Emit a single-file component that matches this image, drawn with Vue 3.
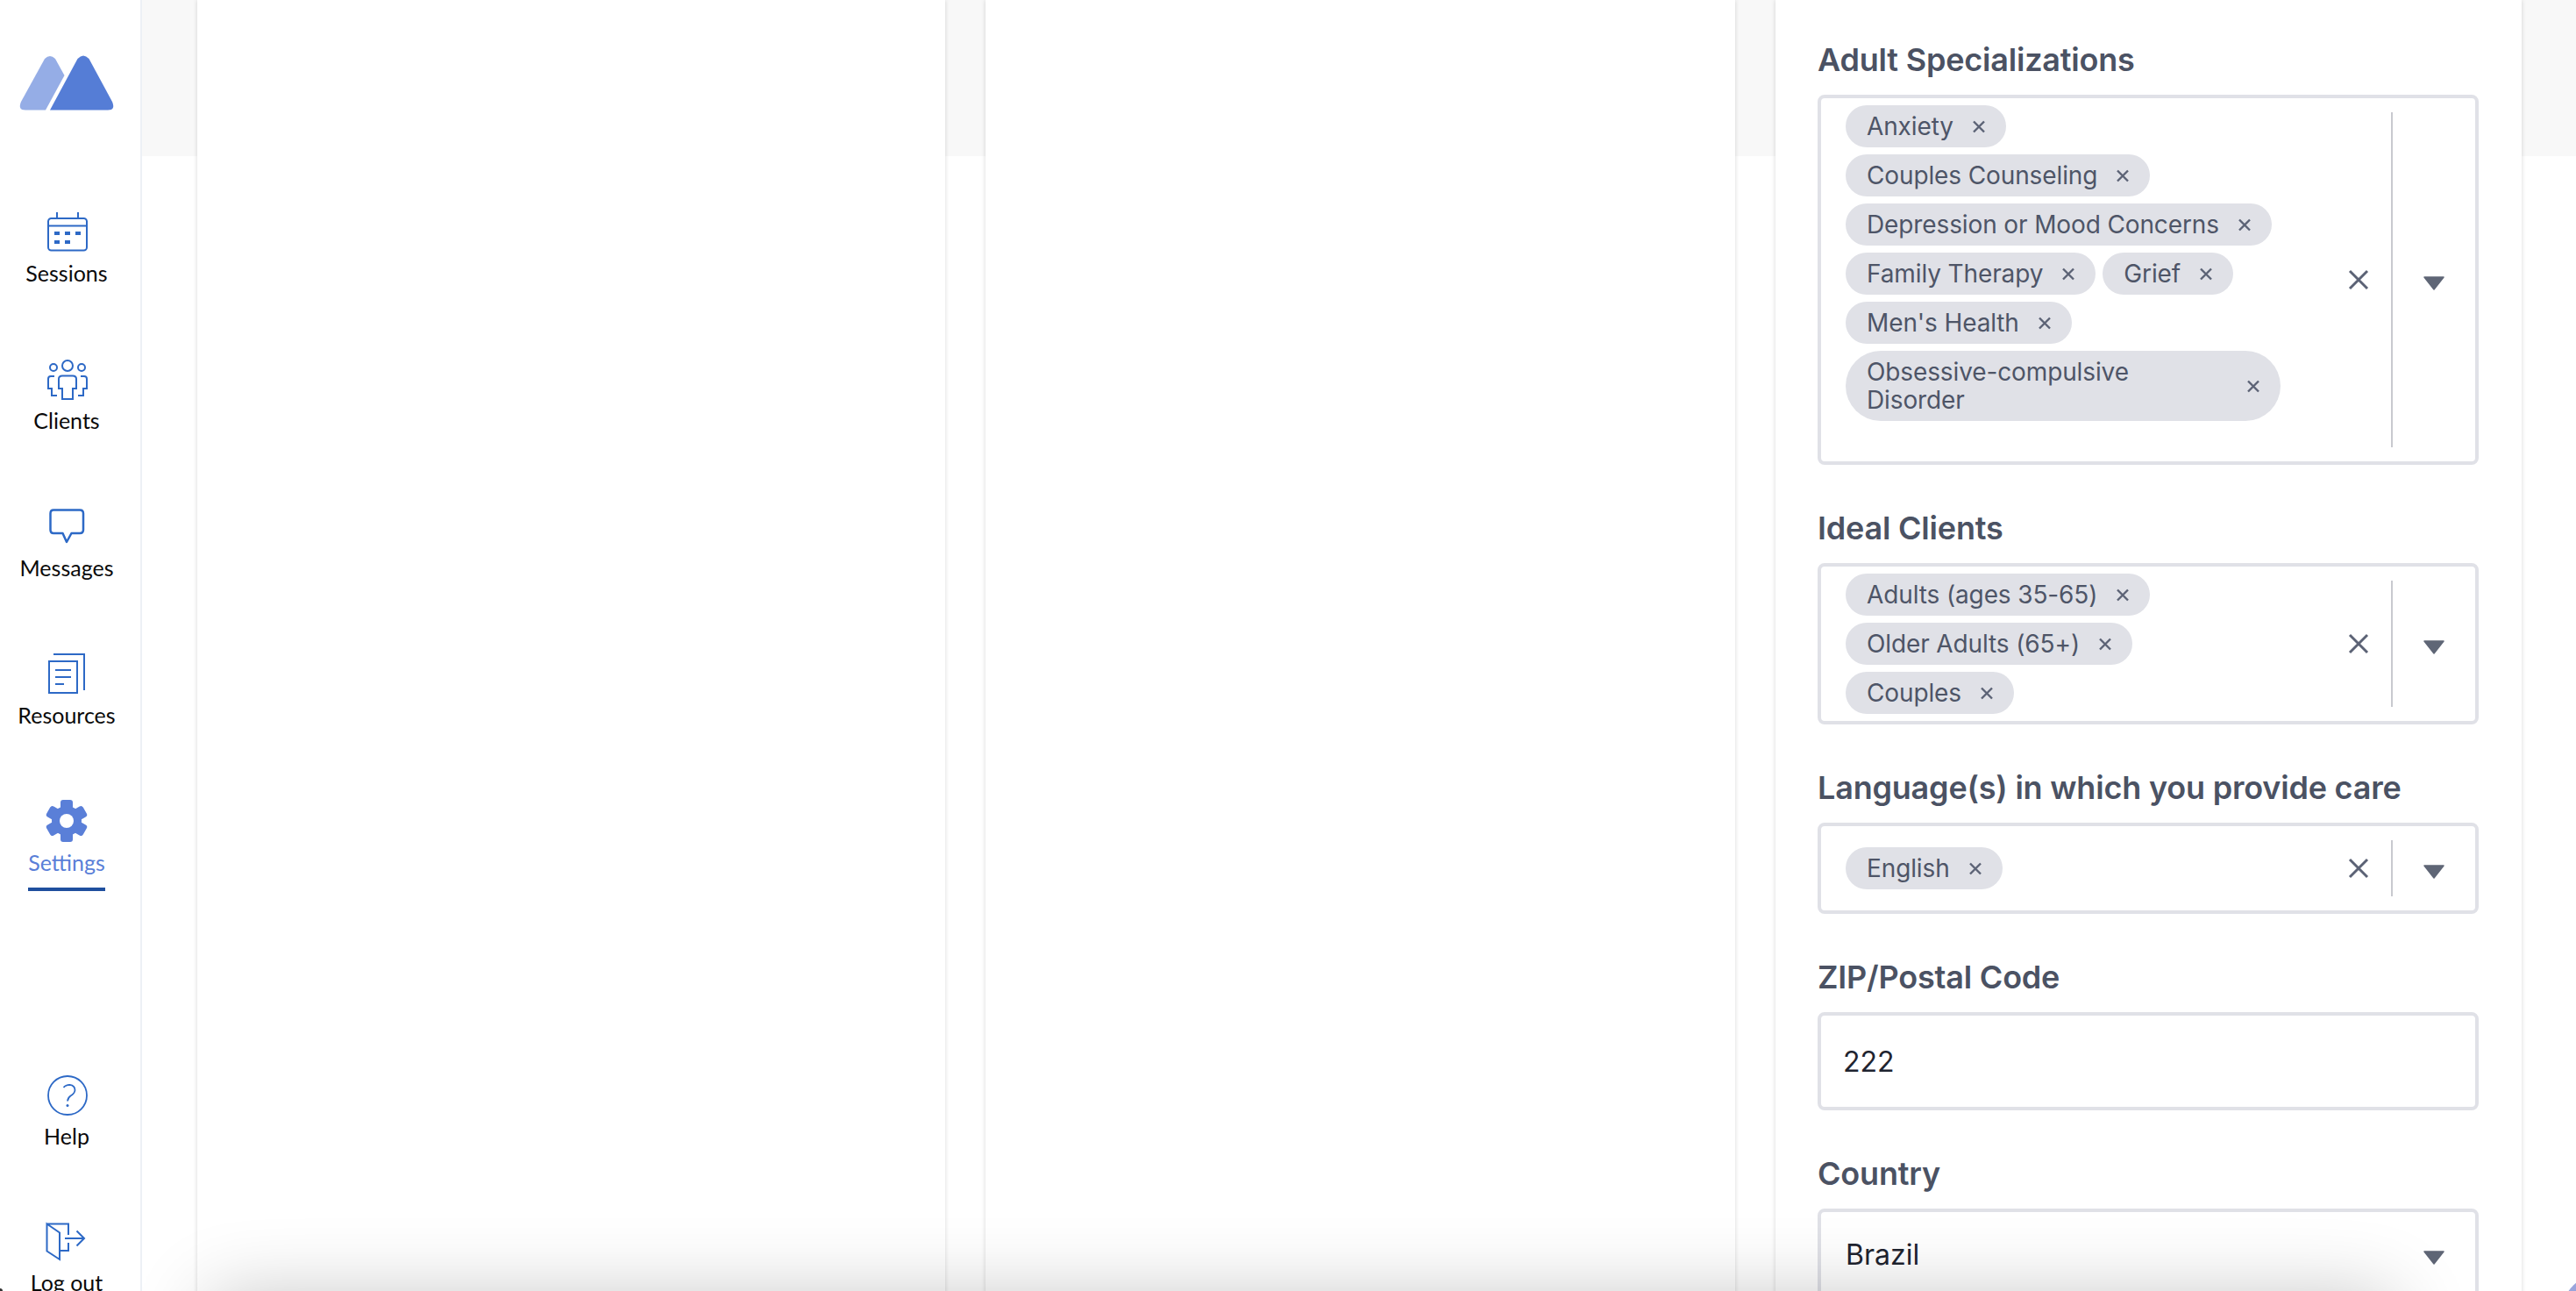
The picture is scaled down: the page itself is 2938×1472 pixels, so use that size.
<script setup>
const navItems = [
  { key: 'sessions', label: 'Sessions' },
  { key: 'clients', label: 'Clients' },
  { key: 'messages', label: 'Messages' },
  { key: 'resources', label: 'Resources' },
  { key: 'settings', label: 'Settings', active: true },
]
const adult = ['Anxiety', 'Couples Counseling', 'Depression or Mood Concerns', 'Family Therapy', 'Grief', "Men's Health", 'Obsessive-compulsive Disorder']
const ideal = ['Adults (ages 35-65)', 'Older Adults (65+)', 'Couples']
const langs = ['English']
const selects = [
  { label: 'Adult Specializations', tags: adult, extra: true },
  { label: 'Ideal Clients', tags: ideal },
  { label: 'Language(s) in which you provide care', tags: langs, tall: true },
]
</script>

<template>
  <div class="app">
    <aside class="sidebar">
      <svg class="logo" viewBox="20 60 112 68" width="112" height="68">
        <path fill="#95ade6" d="M52 125.5H29Q20 125.5 24 116L51 67Q57 61 63 67L73.5 86Z" />
        <path fill="#557dd6" d="M57 125.5L88.5 67Q95 60 101.5 67L128 116Q132 125.5 123 125.5Z" />
      </svg>
      <nav class="nav">
        <a v-for="item in navItems" :key="item.key" class="nav-item" :class="{ active: item.active }">
          <svg v-if="item.key === 'sessions'" class="icon" viewBox="52 240 48 48" fill="none" stroke="#2d69c6" stroke-width="2">
            <rect x="55" y="249" width="44" height="36.500" rx="3.500" />
            <path d="M55 257.500H99M65 242V249M89 242V249" />
            <path fill="#2d69c6" stroke="none" d="M62 264h6v4h-6zM74 264h6v4h-6zM86 264h6v4h-6zM62 274h6v4h-6zM74 274h6v4h-6z" />
          </svg>
          <svg v-else-if="item.key === 'clients'" class="icon" viewBox="52 408 48 48" fill="none" stroke="#2d69c6" stroke-width="2">
            <circle cx="77" cy="417" r="6" />
            <circle cx="61" cy="419" r="4" />
            <circle cx="93" cy="419" r="4" />
            <path d="M71 455V443H67V432Q67 428.500 71 428.500H83Q87 428.500 87 432V443H83V455Z" />
            <path d="M62 429H58Q55 429 55 432V443H59V451H65M92 429H96Q99 429 99 432V443H95V451H89" />
          </svg>
          <svg v-else-if="item.key === 'messages'" class="icon" viewBox="52 576 48 48" fill="none" stroke="#2d69c6" stroke-width="2.500" stroke-linejoin="round">
            <path d="M61 581.500H91Q95 581.500 95 585.500V604Q95 608 91 608H81.500L76 618L71.500 608H61Q57.500 608 57.500 604V585.500Q57.500 581.500 61 581.500Z" />
          </svg>
          <svg v-else-if="item.key === 'resources'" class="icon" viewBox="52 744 48 48" fill="none" stroke="#2d69c6" stroke-width="2">
            <rect x="56" y="754" width="32" height="36" />
            <path d="M61 746H96V787M63 764H81M63 772H81M63 780H73" />
          </svg>
          <svg v-else class="icon" viewBox="52 912 48 48">
            <g fill="#5a7fd8">
              <circle cx="76" cy="936" r="17" />
              <rect x="69" y="912" width="14" height="48" rx="3" />
              <rect x="69" y="912" width="14" height="48" rx="3" transform="rotate(60 76 936)" />
              <rect x="69" y="912" width="14" height="48" rx="3" transform="rotate(120 76 936)" />
            </g>
            <circle cx="76" cy="936" r="8" fill="#fff" />
          </svg>
          <span class="nav-label">{{ item.label }}</span>
        </a>
      </nav>
      <div class="nav nav-bottom">
        <a class="nav-item">
          <svg class="icon" viewBox="52 1224 48 48" fill="none" stroke="#2d69c6" stroke-width="1.800">
            <circle cx="77" cy="1249" r="22" />
            <path d="M72.500 1240Q75 1236.800 79.500 1236.800Q85.500 1237.500 85.500 1243Q85 1247 80.500 1249.500Q77.500 1251.500 77 1255.500" />
            <circle cx="77" cy="1260.500" r="1.500" fill="#2d69c6" stroke="none" />
          </svg>
          <span class="nav-label">Help</span>
        </a>
        <a class="nav-item">
          <svg class="icon" viewBox="52 1391 48 48" fill="none" stroke="#2d69c6" stroke-width="2">
            <path d="M53.500 1395.500L68 1405.500V1436L53.500 1426.500ZM53.500 1395.500H78V1408M68 1426H78V1417M74 1412H96M87.500 1403.500L96 1412L87.500 1420.500" />
          </svg>
          <span class="nav-label">Log out</span>
        </a>
      </div>
    </aside>

    <main class="main">
      <section class="card"></section>
      <section class="card"></section>
      <section class="card form">
        <div v-for="sel in selects" :key="sel.label" class="field">
          <label class="field-label">{{ sel.label }}</label>
          <div class="select" :class="{ tall: sel.tall }">
            <div class="values">
              <span v-for="tag in sel.tags" :key="tag" class="tag">
                <span class="tag-text">{{ tag }}</span>
                <svg class="tag-x" viewBox="0 0 16 15" fill="none" stroke="#5b6275" stroke-width="2.400"><path d="M2 1.500L14 13.500M14 1.500L2 13.500" /></svg>
              </span>
              <div v-if="sel.extra" class="input-row"></div>
            </div>
            <div class="indicators">
              <svg class="clear" viewBox="0 0 24 24" fill="none" stroke="#5b6275" stroke-width="3"><path d="M2 2L22 22M22 2L2 22" /></svg>
              <span class="sep"></span>
              <span class="arrow-wrap"><svg class="arrow" viewBox="0 0 24 16"><path fill="#5f6676" stroke="#5f6676" stroke-width="1.500" stroke-linejoin="round" d="M1 1H23L12 15Z" /></svg></span>
            </div>
          </div>
        </div>
        <div class="field">
          <label class="field-label">ZIP/Postal Code</label>
          <div class="text-input">222</div>
        </div>
        <div class="field">
          <label class="field-label">Country</label>
          <div class="select single">
            <span class="single-value">Brazil</span>
            <span class="arrow-wrap"><svg class="arrow" viewBox="0 0 24 16"><path fill="#5f6676" stroke="#5f6676" stroke-width="1.500" stroke-linejoin="round" d="M1 1H23L12 15Z" /></svg></span>
          </div>
        </div>
      </section>
    </main>

    <div class="bottom-shadow"></div>
    <div class="chat-bubble"></div>
    <div class="corner-mark"></div>
  </div>
</template>

<style>
html, body { margin: 0; height: 100%; overflow: hidden; background: #fff; }
</style>

<style scoped>
.app {
  position: relative;
  display: flex;
  width: 2938px;
  height: 1472px;
  overflow: hidden;
  background: #fff;
  font-family: "Inter", "Liberation Sans", sans-serif;
}
.sidebar {
  flex: none;
  width: 152px;
  padding-right: 8px;
  border-right: 2px solid #edf0f5;
  display: flex;
  flex-direction: column;
  align-items: center;
  box-sizing: content-box;
}
.logo { display: block; flex: none; margin-top: 60px; }
.nav { display: flex; flex: none; flex-direction: column; margin-top: 112px; width: 100%; }
.nav-bottom { margin-top: 144px; }
.nav-item {
  position: relative;
  display: flex;
  flex: none;
  flex-direction: column;
  align-items: center;
  height: 168px;
  color: #0a0a0a;
}
.nav-bottom .nav-item { height: 167px; }
.icon { display: block; width: 48px; height: 48px; flex: none; }
.nav-label {
  margin-top: 5px;
  font-family: "Lato", "Liberation Sans", sans-serif;
  font-size: 25px;
  line-height: 36px;
}
.nav-item.active .nav-label { color: #5a7fd8; }
.nav-item.active::after {
  content: "";
  position: absolute;
  top: 100px;
  left: 32px;
  width: 88px;
  height: 4px;
  background: #1f4f9e;
}
.main {
  flex: 1;
  min-width: 0;
  display: grid;
  grid-template-columns: 853px 855px 851px;
  gap: 46px;
  padding-left: 63px;
  background: linear-gradient(#f8f8f8 178px, #fff 178px);
}
.card {
  min-width: 0;
  height: 1600px;
  background: #fff;
  box-shadow: 0 0 5px rgba(0, 0, 0, 0.16);
}
.form { padding: 44px 49px 0 48px; box-sizing: border-box; }
.field { margin-bottom: 48px; }
.field-label {
  display: block;
  margin-bottom: 16px;
  font-size: 36px;
  line-height: 48px;
  font-weight: 600;
  color: #4b5263;
  letter-spacing: -0.2px;
}
.select {
  display: flex;
  align-items: stretch;
  border: 4px solid #e0e1e7;
  border-radius: 8px;
  background: #fff;
  box-sizing: border-box;
}
.select.tall { height: 104px; }
.values {
  box-sizing: border-box;
  width: 532px;
  padding: 8px 8px 8px 28px;
  display: flex;
  flex-wrap: wrap;
  align-content: center;
  gap: 8px;
}
.tag {
  display: inline-flex;
  align-items: center;
  min-height: 48px;
  max-width: 100%;
  box-sizing: border-box;
  padding: 8px 23px 8px 24px;
  border-radius: 40px;
  background: #e0e1e7;
  color: #4e5567;
  font-size: 28px;
  line-height: 32px;
  letter-spacing: -0.12px;
}
.tag-text { flex: 1 1 auto; }
.tag-x { flex: none; width: 16px; height: 15px; margin-left: 21px; }
.input-row { width: 100%; height: 30px; }
.indicators {
  margin-left: auto;
  display: flex;
  align-items: center;
}
.clear { width: 24px; height: 24px; margin-right: 25px; }
.sep { align-self: stretch; width: 2px; margin: 16px 0; background: #c8c9cf; }
.arrow-wrap { display: flex; width: 94px; justify-content: center; }
.arrow { display: block; width: 24px; height: 16px; margin-top: 8px; }
.text-input {
  box-sizing: border-box;
  height: 112px;
  border: 4px solid #e0e1e7;
  border-radius: 8px;
  padding-left: 25px;
  display: flex;
  align-items: center;
  font-size: 32px;
  color: #1f2430;
}
.select.single { height: 104px; align-items: center; padding-left: 28px; justify-content: space-between; }
.single-value { font-size: 32px; color: #1f2430; }
.bottom-shadow {
  position: absolute;
  left: 290px;
  right: 260px;
  top: 1530px;
  height: 100px;
  box-shadow: 0 0 90px 50px rgba(0, 0, 0, 0.24);
  pointer-events: none;
}
.chat-bubble {
  position: absolute;
  left: 2920px;
  top: 1450px;
  width: 104px;
  height: 104px;
  border-radius: 50%;
  background: #9aa5dc;
}
.corner-mark {
  position: absolute;
  left: -3px;
  top: 1469px;
  width: 6px;
  height: 6px;
  border-radius: 50%;
  background: #333;
}
</style>
